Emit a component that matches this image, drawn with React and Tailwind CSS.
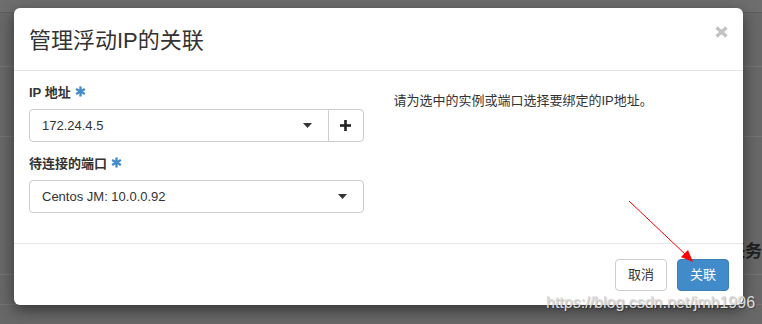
import React from "react";

const font = { fontFamily: '"Liberation Sans", "Noto Sans CJK SC", sans-serif' };

function Asterisk() {
  return (
    <svg width="11" height="11" viewBox="0 0 12 12" className="inline-block ml-[4px] -mt-[4px] align-middle">
      <g stroke="#428bca" strokeWidth="2.6" strokeLinecap="butt">
        <line x1="6" y1="0.5" x2="6" y2="11.5" />
        <line x1="1.2" y1="3.2" x2="10.8" y2="8.8" />
        <line x1="1.2" y1="8.8" x2="10.8" y2="3.2" />
      </g>
    </svg>
  );
}

function Caret() {
  return (
    <svg width="9" height="5" viewBox="0 0 9 5">
      <polygon points="0,0 9,0 4.5,5" fill="#333" />
    </svg>
  );
}

function FieldLabel({ children }) {
  return (
    <div className="h-[18px] leading-[18px] mb-[7px] text-[13px] font-bold text-[#333]">
      {children}
      <Asterisk />
    </div>
  );
}

export default function App() {
  return (
    <div className="relative w-[762px] h-[324px] overflow-hidden bg-[#686868]" style={font}>
      {/* dimmed page behind the dialog */}
      <div className="flex flex-col">
        <div className="h-[13px] bg-[#6e6e6e] border-b border-[#5e5e5e]" />
        <div className="h-[54px] border-b border-[#747474]" />
        <div className="h-[70px] border-b border-[#747474]" />
        <div className="h-[46px]" />
        <div className="h-[92px] border-b border-[#747474] flex items-end justify-end pb-[14px]">
          <span className="text-[17px] font-bold text-[#1e1e1e] leading-none">任务</span>
        </div>
        <div className="h-[30px] border-b border-[#747474]" />
      </div>

      {/* dialog */}
      <div className="absolute left-[14px] top-[8px] w-[729px] h-[297px] bg-white rounded-[6px] shadow-[0_5px_15px_rgba(0,0,0,0.5)] flex flex-col">
        <div className="h-[63px] border-b border-[#e5e5e5] px-[15px] pt-[17px] flex justify-between items-start">
          <h4 className="text-[22px] leading-[28px] mt-[2px] text-[#333] font-normal">管理浮动IP的关联</h4>
          <svg width="13" height="12" viewBox="0 0 13 12" className="mt-[1px]">
            <g stroke="#c4c4c4" strokeWidth="3.4">
              <line x1="1.5" y1="1.5" x2="11.5" y2="10.5" />
              <line x1="11.5" y1="1.5" x2="1.5" y2="10.5" />
            </g>
          </svg>
        </div>

        <div className="h-[172px] px-[15px] pt-[13px] grid grid-cols-2 gap-[30px]">
          <div className="flex flex-col">
            <FieldLabel>IP 地址</FieldLabel>
            <div className="flex h-[33px]">
              <div className="flex-1 flex items-center justify-between pl-[12px] pr-[16px] border border-[#ccc] rounded-l-[4px] text-[13px] text-[#333]">
                <span>172.24.4.5</span>
                <Caret />
              </div>
              <div className="w-[36px] -ml-px flex items-center justify-center border border-[#ccc] rounded-r-[4px]">
                <svg width="11" height="11" viewBox="0 0 11 11">
                  <g stroke="#222" strokeWidth="2.6">
                    <line x1="5.5" y1="0" x2="5.5" y2="11" />
                    <line x1="0" y1="5.5" x2="11" y2="5.5" />
                  </g>
                </svg>
              </div>
            </div>

            <div className="mt-[13px]">
              <FieldLabel>待连接的端口</FieldLabel>
            </div>
            <div className="h-[33px] flex items-center justify-between pl-[12px] pr-[16px] border border-[#ccc] rounded-[4px] text-[13px] text-[#333]">
              <span>Centos JM: 10.0.0.92</span>
              <Caret />
            </div>
          </div>

          <div className="mt-[8px] text-[13px] leading-[18px] text-[#333]">
            请为选中的实例或端口选择要绑定的IP地址。
          </div>
        </div>

        <div className="h-[62px] border-t border-[#e5e5e5] px-[14px] pt-[15px] flex justify-end gap-[10px]">
          <button className="h-[32px] px-[12px] text-[13px] text-[#333] bg-white border border-[#ccc] rounded-[4px]">
            取消
          </button>
          <button className="h-[32px] px-[12px] text-[13px] text-white bg-[#428bca] border border-[#3b7fba] rounded-[4px]">
            关联
          </button>
        </div>
      </div>

      {/* red annotation arrow */}
      <svg className="absolute left-0 top-0" width="762" height="324" viewBox="0 0 762 324">
        <line x1="629" y1="201" x2="686" y2="255" stroke="#ff0000" strokeWidth="1" />
        <polygon points="693,262 681,257 688,250" fill="#ff0000" />
      </svg>

      {/* watermark */}
      <div className="absolute left-[546px] top-[293px] text-[16px] leading-[20px] text-[#dcdcdc] [text-shadow:1px_1px_1px_rgba(0,0,0,0.3)]">
        https://blog.csdn.net/jmh1996
      </div>
    </div>
  );
}
